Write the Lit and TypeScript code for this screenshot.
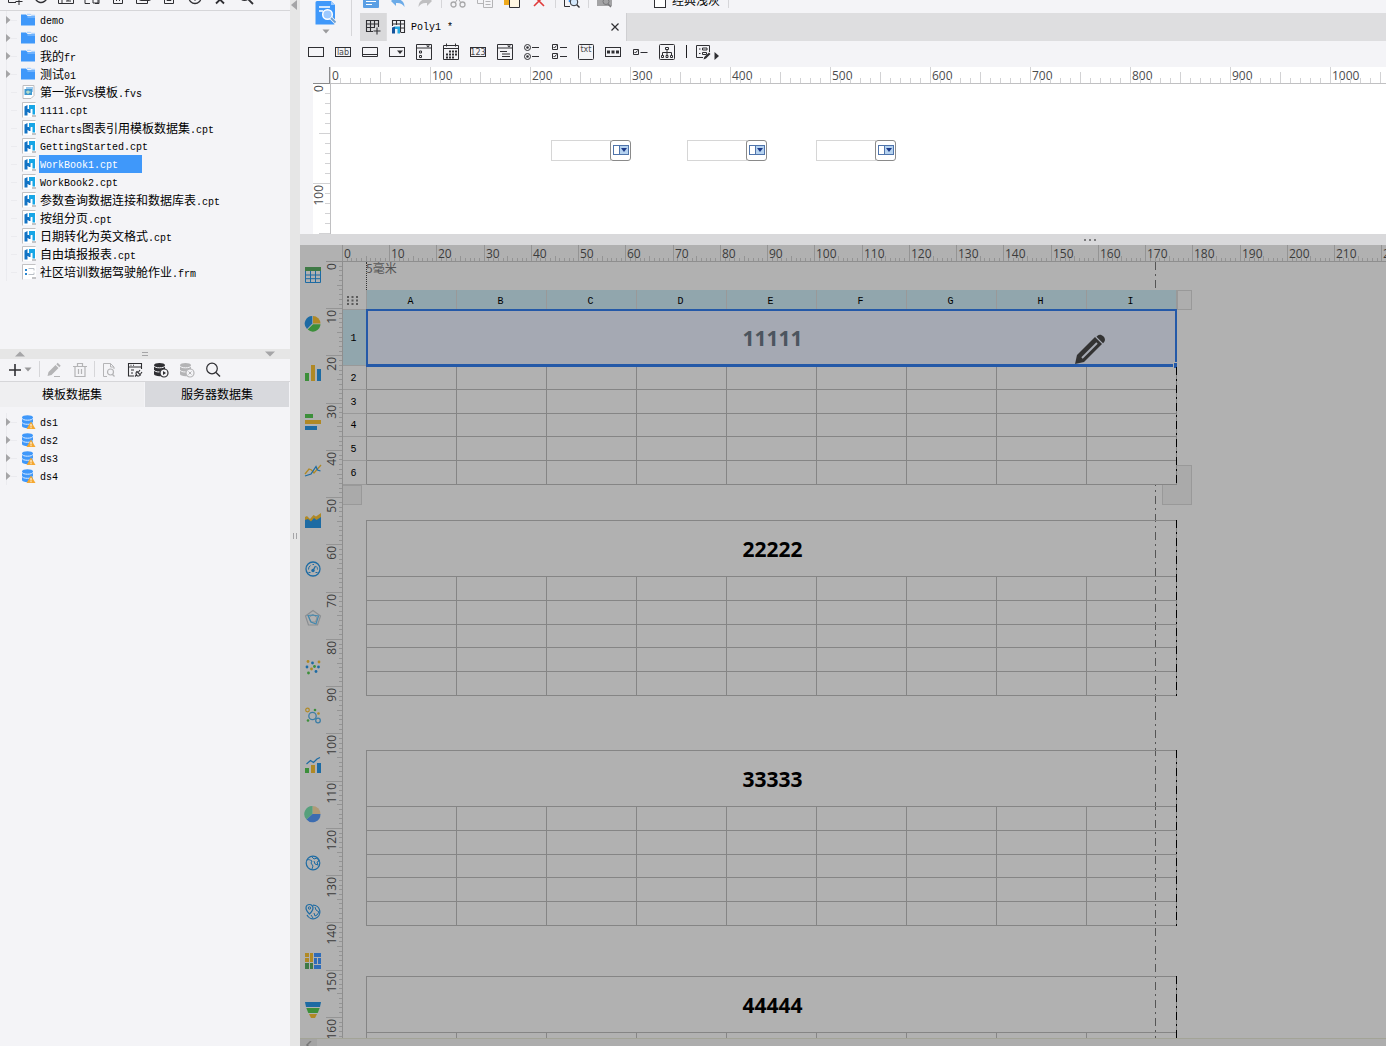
import { LitElement, html, svg, css, nothing, TemplateResult, SVGTemplateResult } from "lit";
import { customElement, property, state } from "lit/decorators.js";
import { classMap } from "lit/directives/class-map.js";

/* ---------- icon set: [viewBox width, viewBox height, drawing] ---------- */

const K = "#2f2f33";
const G = "#b4b4b6";
const BLUE = "#1d6ba3";
const GOLD = "#b08925";
const GREEN = "#3c8f3a";

const database = (c: string) => svg`
  <path d="M1 3.2C1 1.8 3.6 1 6.5 1S12 1.8 12 3.2V12c0 1.4-2.6 2.2-5.500 2.200S1 13.400 1 12Z" fill=${c}/>
  <path d="M1 3.800c0 1.200 2.600 2 5.500 2S12 5 12 3.800M1 8c0 1.200 2.600 2 5.500 2S12 9.200 12 8" fill="none" stroke="#f4f4f7" stroke-width="1"/>`;

const icons: Record<string, [number, number, SVGTemplateResult]> = {
  folder: [16, 14, svg`<path d="M1 1.500h5l1.500 1.500H15v9.500H1Z" fill="#3f98fa"/><path d="M7 1.300h3.500l1 1H15M7.500 4h7.500" stroke="#9fccff" fill="none"/>`],
  cpt: [14, 16, svg`<path d="M.5 15.500V.5h13" fill="none" stroke="#c2c2c4"/><rect x="1" y="1" width="13" height="14" fill="#fff"/><rect x="10" y="13" width="4" height="2" fill="#c4c4c6"/><path d="M2.500 4.500 5.500 3v4h3v4h-2v-1h-1v3.500h-3Z" fill="#1273c4"/><path d="M7 3h6v9.500h-2.500V7H9l-2 1Z" fill="#17a5e6"/>`],
  fvs: [14, 16, svg`<path d="M1 1.500h11v10l-3 3H1Z" fill="#fff" stroke="#bdbdc0"/><rect x="4" y="3" width="7" height="5" fill="#9cc9ee"/><rect x="2.500" y="5" width="7.500" height="6" fill="#3f98cf"/><path d="M4 8h4.500M6 6.500v3.500" stroke="#dff3c8"/>`],
  frm: [14, 16, svg`<path d="M.5 15.500V.5h13" fill="none" stroke="#c2c2c4"/><rect x="1" y="1" width="13" height="14" fill="#fff"/><rect x="10" y="13" width="4" height="2" fill="#c4c4c6"/><path d="M3 5h2v2H3ZM3 9h2v2H3Z" fill="#2a86cf"/><path d="M6.500 4.500H12v2M6.500 10.500H12v-2" fill="none" stroke="#b9bfc6"/>`],
  dataset: [16, 16, svg`<path d="M2 3.200C2 2 4.500 1.200 7.500 1.200s5.500.8 5.500 2V12c0 1.300-2.500 2.200-5.500 2.200S2 13.300 2 12Z" fill="#3f98fa"/><path d="M2 4.200c0 1.200 2.500 2 5.500 2s5.500-.8 5.500-2M2 8.300c0 1.200 2.500 2 5.500 2s5.500-.8 5.500-2" fill="none" stroke="#dcecff"/><path d="M11 7.500 15.500 15h-9Z" fill="#f5a831"/><path d="M11 10v2.500M11 13.200v1" stroke="#fff"/>`],

  newFile: [16, 16, svg`<path d="M9 13.500H1.500v-11h11V9M8.500 12.500h7M12 9v7" fill="none" stroke=${K}/>`],
  refresh: [16, 16, svg`<path d="M14 8a6 6 0 1 1-2-5" fill="none" stroke=${K} stroke-width="1.500"/>`],
  openFolder: [16, 16, svg`<path d="M.5 14.500v-12h5l2 2h8v10ZM4 14V8h4M10 8v4M8 12h5" fill="none" stroke=${K}/>`],
  rename: [16, 16, svg`<path d="M1 14.500V3.500h14v11h-4M1 14.500h5" fill="none" stroke=${K}/><path d="M9 9h5v5H9Z" fill="none" stroke=${K}/>`],
  bin: [16, 16, svg`<path d="M3.500 4v10.500h9V4M6.500 6v6M9.500 6v6M1 3.500h14" fill="none" stroke=${K}/>`],
  copyFile: [16, 16, svg`<rect x="4.500" y="2.500" width="11" height="9" rx="1" fill="none" stroke=${K}/><path d="M1.500 6v8.500h11V12" fill="none" stroke=${K}/>`],
  lockFile: [16, 16, svg`<path d="M3.500 2.500h9v12h-9ZM6 11.500h4V8H6Z" fill="none" stroke=${K}/>`],
  locate: [16, 16, svg`<circle cx="8" cy="8.500" r="6" fill="none" stroke=${K} stroke-width="1.300"/><path d="m5.500 9 2.500 2.500 2.500-2.500" fill="none" stroke=${K}/>`],
  collapse: [16, 16, svg`<path d="M4 14.500 8 10.500l4 4M8 10.500V6" fill="none" stroke=${K} stroke-width="1.800"/>`],
  find: [16, 16, svg`<circle cx="6.500" cy="6.500" r="5" fill="none" stroke=${K} stroke-width="1.200"/><path d="m10 10 5 5" stroke=${K} stroke-width="1.800"/>`],

  plus: [12, 12, svg`<path d="M6 0v12M0 6h12" stroke=${K} stroke-width="1.600"/>`],
  caret: [8, 5, svg`<path d="M.5.500h7L4 4.500Z" fill="#9a9a9c"/>`],
  pencil: [16, 16, svg`<path d="m1.500 14 1-4 7-7 3 3-7 7ZM10.300 2.200l1.400-1.400 3 3-1.400 1.400Z" fill=${G}/><path d="M8 14.500h6" stroke=${G}/>`],
  trash: [16, 16, svg`<path d="M1 4.500h14M5.500 4V1.500h5V4M3 5v9.500h10V5M6.500 7v5M9.500 7v5" fill="none" stroke=${G} stroke-width="1.200"/>`],
  preview: [16, 16, svg`<path d="M6 14.500H2.500v-13h7l3.500 3.500v2M9.500 1.500V5H13" fill="none" stroke=${G}/><circle cx="9.500" cy="10" r="3" fill="none" stroke=${G} stroke-width="1.200"/><path d="m11.500 12.500 2 2" stroke=${G} stroke-width="1.300"/>`],
  config: [16, 16, svg`<path d="M7 14H1.500V1.500h13V7M1.500 5h13M4 8h3M4 11h2M3.500 3.200h1M6 3.200h1" fill="none" stroke=${K} stroke-width="1.100"/><path d="m8 14.500 2-2M10 9.500a2.500 2.500 0 1 0 3.500 3.500ZM11.500 10l1.500-2M13.500 12l1.500-2" fill="none" stroke=${K} stroke-width="1.100"/>`],
  dbRun: [16, 16, svg`${database(K)}<circle cx="11" cy="11" r="4" fill="#f4f4f7" stroke=${K} stroke-width="1.200"/><path d="M10 9v4l3-2Z" fill=${K}/>`],
  dbStop: [16, 16, svg`${database(G)}<circle cx="11" cy="11" r="4" fill="#f4f4f7" stroke=${G} stroke-width="1.200"/><path d="m9.500 9.500 3 3m0-3-3 3" stroke=${G}/>`],
  search: [16, 16, svg`<circle cx="7" cy="6.500" r="5.300" fill="none" stroke=${K} stroke-width="1.200"/><path d="m11 10.500 4 4" stroke=${K} stroke-width="1.400"/>`],

  template: [24, 24, svg`<path d="M3 0h14l4 4v18a1.500 1.500 0 0 1-1.500 1.500H1.500V1.500A1.500 1.500 0 0 1 3 0Z" fill="#3f98fa"/><path d="M17 0v4h4" fill="#9fccff"/><path d="M5 6h11M5 10h4" stroke="#fff" stroke-width="1.600"/><circle cx="13.500" cy="13.500" r="4.800" fill="#9cc9ff" stroke="#fff" stroke-width="1.500"/><path d="m17 17 5 5" stroke="#f4f4f7" stroke-width="3.500"/><path d="m17 17 4.500 4.500" stroke="#6f9fd0" stroke-width="1.800"/>`],
  save: [16, 16, svg`<rect width="16" height="16" rx="1" fill="#5b9fe4"/><path d="M3 9.500h10M3 12.500h6" stroke="#fff"/>`],
  undo: [16, 16, svg`<path d="M6 4 1 9l5 5v-3c4-.5 6.500 1 8.500 4 0-5-3-8-8.500-8Z" fill="#6cabe8"/>`],
  redo: [16, 16, svg`<path d="m10 4 5 5-5 5v-3c-4-.5-6.500 1-8.500 4 0-5 3-8 8.500-8Z" fill="#bfbfc1"/>`],
  cut: [16, 16, svg`<path d="m5 11 7-11M11 11 4 0" stroke="#a9a9ab"/><circle cx="3.500" cy="12.500" r="2.500" fill="none" stroke="#a9a9ab" stroke-width="1.300"/><circle cx="12.500" cy="12.500" r="2.500" fill="none" stroke="#a9a9ab" stroke-width="1.300"/>`],
  copy: [16, 16, svg`<path d="M.5 1.500h9v10h-9Z" fill="none" stroke=${G}/><path d="M6.500 5.500h9v10h-9Z" fill="#f4f4f7" stroke=${G}/><path d="M8.500 9.500h5M8.500 12.500h5" stroke=${G}/>`],
  paste: [16, 16, svg`<path d="M0 0h10v13H0Z" fill="#efaa1e"/><path d="M5.500 5.500h10v10h-10Z" fill="#fff6e2" stroke=${K}/>`],
  remove: [16, 16, svg`<path d="m3 4 10 10M13 4 3 14" stroke="#e03a3a" stroke-width="1.600"/>`],
  pagePreview: [16, 16, svg`<path d="M6 14.500H.5V1h12v3" fill="none" stroke=${K}/><path d="M5.500 10V7h3" fill="none" stroke="#3f98fa" stroke-width="1.500"/><circle cx="10" cy="10" r="3.800" fill="#d4e8fb" stroke=${K}/><path d="m12.800 12.800 2.700 2.700" stroke=${K} stroke-width="1.400"/>`],
  findTpl: [16, 16, svg`<path d="M0 0h15v14H0Z" fill="#a3a3a5"/><circle cx="9" cy="9.500" r="3" fill="none" stroke="#77777a"/><path d="m11 12 3 3" stroke="#77777a" stroke-width="1.500"/>`],
  addSheet: [16, 16, svg`<path d="M8 12.500H1.500v-11h12V8M1.500 5h12M1.500 8.500H10M5.500 1.500v11M9.500 1.500V8M8.500 12h7M12 8.500v7" fill="none" stroke=${K} stroke-width="1.100"/>`],
  sheet: [16, 16, svg`<path d="M1.500 7V1.500h12v12H10M1.500 5h12M9.500 9h4M5.500 1.500V6M9.500 1.500v12" fill="none" stroke=${K} stroke-width="1.100"/><path d="M1 8.500 4 7.500v7H1Z" fill="#14539c"/><path d="M4 7.500h5v7H6.500V10H4Z" fill="#27a8e0"/>`],
  close: [10, 10, svg`<path d="m1.500 1.500 7 7m0-7-7 7" stroke=${K} stroke-width="1.200"/>`],

  wText: [18, 18, svg`<rect x="1.500" y="4.500" width="15" height="9" fill="none" stroke=${K}/>`],
  wLabel: [18, 18, svg`<rect x="1.500" y="4.500" width="15" height="9" fill="none" stroke=${K}/><text x="9" y="12" class="glyph">lab</text>`],
  wButton: [18, 18, svg`<path d="M1.500 13.500v-9h15v9ZM2 11.500h14" fill="none" stroke=${K}/>`],
  wCombo: [18, 18, svg`<rect x="1.500" y="4.500" width="15" height="9" fill="none" stroke=${K}/><path d="M9 7.500h6l-3 3.500Z" fill=${K}/>`],
  wComboCheck: [18, 18, svg`<path d="M1.500 1.500h15v15h-15ZM1.500 5h15M4.500 8h2v2h-2ZM4.500 12.500h2v2h-2Z" fill="none" stroke=${K}/><path d="M11 2.500h4l-2 2Z" fill=${K}/>`],
  wDate: [18, 18, svg`<path d="M1.500 2.500h15v14h-15ZM1.500 5.500h15M4.500.5v3M13.500.5v3" fill="none" stroke=${K}/><path d="M7 8.500h8M4 11.500h11M4 14.500h8" stroke=${K} stroke-width="2" stroke-dasharray="2 1"/>`],
  wNumber: [18, 18, svg`<rect x="1.500" y="4.500" width="15" height="9" fill="none" stroke=${K}/><text x="9" y="12" class="glyph">123</text>`],
  wTree: [18, 18, svg`<path d="M1.500 1.500h15v15h-15ZM1.500 5h15M4 8.500h7M6 11h8M6 13.500h8" fill="none" stroke=${K}/><path d="M11 2.500h4l-2 2Z" fill=${K}/>`],
  wRadio: [18, 18, svg`<circle cx="4.500" cy="4.500" r="3" fill="none" stroke=${K}/><circle cx="4.500" cy="13.500" r="3" fill="none" stroke=${K}/><circle cx="4.500" cy="4.500" r="1.300" fill=${K}/><circle cx="4.500" cy="13.500" r="1.300" fill=${K}/><path d="M9 4.500h7M9 13.500h7" stroke=${K}/>`],
  wCheck: [18, 18, svg`<path d="M2.500 1.500h5v5h-5ZM2.500 10.500h5v5h-5ZM10 4.500h7M10 13.500h7M3.500 4l1 1 2-2.500M3.500 13l1 1 2-2.500" fill="none" stroke=${K}/>`],
  wArea: [18, 18, svg`<rect x="1.500" y="1.500" width="15" height="15" rx="1" fill="none" stroke=${K}/><text x="9" y="9" class="glyph">txt</text>`],
  wPassword: [18, 18, svg`<rect x="1.500" y="4.500" width="15" height="9" fill="none" stroke=${K}/><path d="M3 9h12" stroke=${K} stroke-width="3" stroke-dasharray="3 1.500"/>`],
  wSingle: [18, 18, svg`<path d="M2.500 6.500h5v5h-5ZM9.500 9.500h7M3.500 9l1 1 2-2.500" fill="none" stroke=${K}/>`],
  wHierarchy: [18, 18, svg`<rect x="1.500" y="1.500" width="15" height="15" rx="1" fill="none" stroke=${K}/><path d="M7.500 4.500h3v2h-3ZM9 7v5M4.500 12V9.500h9V12M3.500 12.500h2v2h-2ZM8 12.500h2v2H8ZM12.500 12.500h2v2h-2Z" fill="none" stroke=${K}/>`],
  wForm: [18, 18, svg`<path d="M9 14.500H2.500v-12h13V9M5 6h1.500M8.500 5h4.500v2H8.500ZM5 10.500h1.500M8.500 9.500h4v2h-4Z" fill="none" stroke=${K}/><path d="m9.500 16.500.8-2.500 4.700-4.500 1.500 1.500-4.500 4.500Z" fill=${K}/>`],
  more: [6, 10, svg`<path d="M.5 1v8L5 5Z" fill=${K}/>`],
  dropdown: [16, 10, svg`<rect x=".5" y=".5" width="15" height="9" fill="#fff" stroke="#4f74ab"/><path d="M6 1h9v8H6Z" fill="#b5d2ef"/><path d="M6.500 1v8" stroke="#4f74ab"/><path d="M8 3h6l-3 4Z" fill="#1d3a8a"/>`],

  cTable: [18, 18, svg`<path d="M1 1h16v4H1Z" fill="#3f7a46"/><path d="M1.500 5v11.500h15V5M1.500 9h15M1.500 12.700h15M6.500 5v11.500M11.500 5v11.500" fill="none" stroke=${BLUE}/>`],
  cPie: [18, 18, svg`<path d="M9 8.500V1a7.700 7.700 0 0 1 7.500 7.500Z" fill=${GOLD}/><path d="M8.300 8.500V1A7.600 7.600 0 0 0 3 14Z" fill=${BLUE}/><path d="M9 9.300h7.500A7.600 7.600 0 0 1 3.700 14.500Z" fill=${GREEN}/>`],
  cColumn: [18, 18, svg`<path d="M1 9h4v8H1Z" fill=${GREEN}/><path d="M7 1h4v16H7Z" fill=${GOLD}/><path d="M13 5h4v12h-4Z" fill=${BLUE}/>`],
  cBar: [18, 18, svg`<path d="M1 1h8v4H1Z" fill=${GREEN}/><path d="M1 7h16v4H1Z" fill=${GOLD}/><path d="M1 13h12v4H1Z" fill=${BLUE}/>`],
  cLine: [18, 18, svg`<path d="m1 12 4-5 2.500 1L10 11l7-8" fill="none" stroke=${GOLD} stroke-width="1.300"/><path d="m1 14 6-2L12 4.500l1.500 3.500 3 1" fill="none" stroke=${BLUE} stroke-width="1.300"/>`],
  cArea: [18, 18, svg`<path d="m1 6 2-1 3 3 3.500-4 2.500 1.500L17 2v10H1Z" fill=${GOLD}/><path d="m1 9 3-1 3 2.500L10 7l2.500 2L17 6v11H1Z" fill=${BLUE}/>`],
  cGauge: [18, 18, svg`<circle cx="9" cy="9" r="7" fill="none" stroke=${BLUE} stroke-width="1.300"/><path d="M4.500 9.500a4.500 4.500 0 0 1 2-4M8.500 4.500h1.500M13.500 9.500c0-1.500-.5-2.500-1-3M4.500 12.500h2M11.500 12.500h2" fill="none" stroke=${BLUE}/><circle cx="9" cy="10.500" r="1.700" fill=${BLUE}/><path d="m9 10.500 2.500-4.500" stroke=${BLUE} stroke-width="1.300"/>`],
  cRadar: [18, 18, svg`<path d="m9 1.500 7.500 5.500-3 9h-9l-3-9Z" fill="none" stroke="#8c8f92" stroke-width="1.200"/><path d="m9 5.500 4 3-1.500 4.500h-5L5 8.500Z" fill="none" stroke="#8c8f92"/><path d="m4 6.500 4.500-.5 6 1L12 15l-5-2Z" fill="none" stroke="#4388ae" stroke-width="1.200"/>`],
  cScatter: [18, 18, svg`<g fill=${GOLD}><circle cx="4" cy="3.500" r="1.400"/><circle cx="15" cy="4" r="1.400"/><circle cx="7.500" cy="11" r="1.400"/></g><g fill=${BLUE}><circle cx="8.500" cy="5" r="1.400"/><circle cx="3" cy="9" r="1.400"/><circle cx="14.500" cy="9" r="1.400"/><circle cx="12" cy="13.500" r="1.400"/></g><g fill=${GREEN}><circle cx="10.500" cy="8.500" r="1.400"/><circle cx="4.500" cy="15" r="1.400"/></g>`],
  cBubble: [18, 18, svg`<circle cx="8.500" cy="9" r="3.700" fill="none" stroke="#3c7da5" stroke-width="1.300"/><circle cx="14" cy="13.500" r="2.300" fill="none" stroke="#3c7da5" stroke-width="1.300"/><circle cx="3.500" cy="3" r="1.800" fill="none" stroke=${GOLD} stroke-width="1.200"/><circle cx="14.500" cy="6.500" r="1.300" fill=${GOLD}/><circle cx="11" cy="3" r="1.300" fill=${GREEN}/><circle cx="4" cy="13.500" r="1.300" fill=${GREEN}/>`],
  cCombo: [18, 18, svg`<path d="M1 12h4v5H1Z" fill=${GREEN}/><path d="M7 9h4v8H7Z" fill=${GOLD}/><path d="M13 7h4v10h-4Z" fill=${BLUE}/><path d="m2.500 8 4-3.500 3 2L13 3l3-1.500" fill="none" stroke=${BLUE} stroke-width="1.200"/>`],
  cPie3d: [18, 18, svg`<path d="M8.500 9V1a8 8 0 0 1 8 8Z" fill="#b09a76"/><path d="M8.500 9V1a8 8 0 0 0-6 13.500Z" fill="#56a07c"/><path d="M8.500 9h8A8 8 0 0 1 2.500 14.500Z" fill="#3c6cb0"/>`],
  cMap: [18, 18, svg`<circle cx="9" cy="9" r="6.800" fill="none" stroke=${BLUE} stroke-width="1.200"/><path d="M3 6c2-1 3 0 5 1l-1 2 2 3-1 3M8 3l2 2 3-1 2 3-2 1 1 3-3-1-1-3" fill="none" stroke=${BLUE}/>`],
  cPinMap: [18, 18, svg`<path d="M9 2.200A6.800 6.800 0 1 1 3 12" fill="none" stroke=${BLUE} stroke-width="1.200"/><path d="M5.500 11C3 8.500 2 7 2 5a3.500 3.500 0 0 1 7 0c0 2-1 3.500-3.500 6Z" fill="none" stroke=${BLUE} stroke-width="1.200"/><circle cx="5.500" cy="5" r="1.200" fill="none" stroke=${BLUE}/><path d="m11 4 1 3 3 2-2 3-2 1-1-3M7 12l2 3" fill="none" stroke=${BLUE}/>`],
  cTreemap: [18, 18, svg`<path d="M1 1h4v4H1ZM1 6h4v4H1ZM6 1h3v9H6Z" fill=${GOLD}/><path d="M1 11h4v6H1ZM6 11h3v6H6Z" fill="#3f7a46"/><path d="M10 1h7v4h-7ZM10 6h3v6h-3ZM14 6h3v6h-3ZM10 13h7v4h-7Z" fill="#2f6cb8"/>`],
  cFunnel: [18, 18, svg`<path d="M1 1h16l-1 5H2Z" fill=${BLUE}/><path d="M2.300 7h13.400l-2 5H4.300Z" fill=${GREEN}/><path d="M5 13h8l-2 4H7Z" fill=${GOLD}/>`],
};

const icon = (name: string) => {
  const [w, h, body] = icons[name];
  return html`<svg class="icon" width=${w} height=${h} viewBox="0 0 ${w} ${h}" aria-hidden="true">${body}</svg>`;
};

/* Chinese runs are set at 12px, half-width runs at 10px mono (6px per glyph). */
const mixed = (text: string) =>
  text
    .split(/([\u4e00-\u9fff]+)/)
    .filter(Boolean)
    .map((run) => (/[\u4e00-\u9fff]/.test(run) ? html`<span class="han">${run}</span>` : html`<span class="half">${run}</span>`));

/* ---------- ruler ---------- */

@customElement("edge-ruler")
class EdgeRuler extends LitElement {
  @property() axis: "x" | "y" = "x";
  @property({ type: Number }) unit = 10;
  @property({ type: Number }) step = 10;
  @property({ type: Number }) origin = 0;
  @property({ type: Number }) thickness = 17;
  @state() private extent = 0;
  private observer?: ResizeObserver;

  static styles = css`
    :host { display: block; overflow: hidden; color: var(--tick); min-width: 0; min-height: 0; }
    svg { display: block; overflow: hidden; }
    text { font: 12px "Open Sans", "Noto Sans", sans-serif; fill: var(--label); }
  `;

  firstUpdated() {
    this.observer = new ResizeObserver(() => {
      const box = this.getBoundingClientRect();
      this.extent = this.axis === "x" ? box.width : box.height;
    });
    this.observer.observe(this);
  }

  disconnectedCallback() {
    super.disconnectedCallback();
    this.observer?.disconnect();
  }

  render() {
    const t = this.thickness;
    const marks: SVGTemplateResult[] = [];
    for (let i = 0; ; i++) {
      const p = Math.round(this.origin + (i * this.unit) / 10);
      if (p > this.extent) break;
      const size = i % 10 === 0 ? t : i % 5 === 0 ? (this.unit > 60 ? 11 : 5) : this.unit > 60 ? 5 : 3;
      marks.push(
        this.axis === "x"
          ? svg`<rect x=${p} y=${t - size} width="1" height=${size} fill="currentColor"/>`
          : svg`<rect x=${t - size} y=${p} width=${size} height="1" fill="currentColor"/>`
      );
      if (i % 10 === 0) {
        const label = (i / 10) * this.step;
        marks.push(
          this.axis === "x"
            ? svg`<text x=${p + 2} y="13">${label}</text>`
            : svg`<text transform="translate(10 ${p + 2}) rotate(-90)" text-anchor="end">${label}</text>`
        );
      }
    }
    const w = this.axis === "x" ? this.extent : t;
    const h = this.axis === "x" ? t : this.extent;
    return html`<svg width=${w} height=${h}>${marks}</svg>`;
  }
}

/* ---------- data ---------- */

interface Entry { name: string; icon: string; open?: boolean; selected?: boolean }

const files: Entry[] = [
  { name: "demo", icon: "folder", open: true },
  { name: "doc", icon: "folder", open: true },
  { name: "我的fr", icon: "folder", open: true },
  { name: "测试01", icon: "folder", open: true },
  { name: "第一张FVS模板.fvs", icon: "fvs" },
  { name: "1111.cpt", icon: "cpt" },
  { name: "ECharts图表引用模板数据集.cpt", icon: "cpt" },
  { name: "GettingStarted.cpt", icon: "cpt" },
  { name: "WorkBook1.cpt", icon: "cpt", selected: true },
  { name: "WorkBook2.cpt", icon: "cpt" },
  { name: "参数查询数据连接和数据库表.cpt", icon: "cpt" },
  { name: "按组分页.cpt", icon: "cpt" },
  { name: "日期转化为英文格式.cpt", icon: "cpt" },
  { name: "自由填报报表.cpt", icon: "cpt" },
  { name: "社区培训数据驾驶舱作业.frm", icon: "frm" },
];

const datasets: Entry[] = ["ds1", "ds2", "ds3", "ds4"].map((name) => ({ name, icon: "dataset", open: true }));

const fileTools = ["newFile", "refresh", "openFolder", "rename", "bin", "copyFile", "lockFile", "locate", "collapse", "find"];
const widgets = ["wText", "wLabel", "wButton", "wCombo", "wComboCheck", "wDate", "wNumber", "wTree", "wRadio", "wCheck", "wArea", "wPassword", "wSingle", "wHierarchy"];
const charts = ["cTable", "cPie", "cColumn", "cBar", "cLine", "cArea", "cGauge", "cRadar", "cScatter", "cBubble", "cCombo", "cPie3d", "cMap", "cPinMap", "cTreemap", "cFunnel"];
const columns = ["A", "B", "C", "D", "E", "F", "G", "H", "I"];

/* ---------- application ---------- */

@customElement("app-root")
class AppRoot extends LitElement {
  @state() private tab = 0;

  static styles = css`
    :host {
      display: flex;
      height: 100vh;
      overflow: hidden;
      background: #f4f4f7;
      color: #000;
      font: 12px/18px "Liberation Sans", "Noto Sans CJK SC", sans-serif;
      --bg: #f4f4f7;
      --dim: #b1b1b1;
      --grid: #858585;
      --edge: #999;
      --head: #91a6ad;
      --line: #d6d6d9;
    }
    * { box-sizing: border-box; }
    button { border: 0; padding: 0; margin: 0; background: none; font: inherit; color: inherit; display: flex; align-items: center; justify-content: center; flex: none; }
    .icon { display: block; flex: none; }
    .glyph { font: 8px "DejaVu Sans", sans-serif; text-anchor: middle; fill: #4a4a4e; }
    .han { font-family: "Noto Sans CJK SC", sans-serif; font-size: 12px; }
    .half { font-family: "Liberation Mono", monospace; font-size: 10px; }
    .sep { width: 1px; height: 16px; background: var(--line); flex: none; }

    /* left side */
    .side { width: 290px; flex: none; display: flex; flex-direction: column; }
    .files { height: 349px; flex: none; display: flex; flex-direction: column; }
    .file-tools { height: 11px; flex: none; overflow: hidden; display: flex; align-items: flex-end; justify-content: space-between; padding: 0 36px 5px 7px; border-bottom: 1px solid var(--line); }
    .tree { list-style: none; margin: 0; padding: 0; }
    .row { display: flex; align-items: center; height: 18px; padding-left: 6px; }
    .twig { width: 14px; height: 18px; flex: none; display: flex; align-items: center; border-left: 1px solid #ebebef; }
    .twig::after { content: ""; width: 6px; height: 1px; background: #ebebef; margin-left: auto; margin-right: 3px; }
    .twig .icon { margin-left: -1px; }
    .kind { width: 19px; flex: none; display: flex; justify-content: flex-start; }
    .kind.file { padding-left: 2px; }
    .name { line-height: 18px; height: 18px; padding: 0 1px; white-space: nowrap; }
    .selected .name { background: #3f98fa; color: #fff; padding-right: 24px; }
    .split-h { height: 10px; flex: none; background: #e6e6e6; display: flex; align-items: center; justify-content: space-between; padding: 0 15px; }
    .data-tools { height: 23px; flex: none; display: flex; align-items: flex-start; padding-left: 9px; border-bottom: 1px solid var(--line); }
    .data-tools button { width: 26px; height: 21px; }
    .data-tools .add { width: 29px; gap: 3px; justify-content: flex-start; }
    .data-tools .sep { margin: 2px 1px 0; }
    .tabs { display: flex; height: 25px; flex: none; gap: 1px; padding-right: 1px; }
    .tabs button { flex: 1; background: #efeff1; padding-bottom: 2px; }
    .tabs button.off { background: #d8d9dd; }
    .datasets { padding-top: 6px; flex: 1; }
    .split-v { width: 10px; flex: none; background: #e6e6e6; display: flex; flex-direction: column; justify-content: center; position: relative; }
    .split-v .grip { display: flex; gap: 2px; margin-left: 3px; margin-top: 26px; }
    .split-v .grip i { width: 1px; height: 6px; background: #a5a5a7; }
    .split-v .fold { position: absolute; left: 0; top: 0; }

    /* right side */
    .main { flex: 1; min-width: 0; display: flex; flex-direction: column; }
    .head { display: flex; height: 41px; flex: none; }
    .mode { width: 52px; height: 36px; flex: none; border-right: 1px solid var(--line); display: flex; flex-direction: column; align-items: center; justify-content: flex-start; gap: 4px; padding-top: 1px; }
    .head-right { flex: 1; min-width: 0; display: flex; flex-direction: column; padding-left: 8px; }
    .actions { height: 13px; overflow: hidden; display: flex; align-items: flex-end; padding: 0 0 5px 3px; gap: 11px; }
    .actions button { width: 16px; }
    .actions .sep { margin: 0 -3px; }
    .actions .gap { gap: 6px; display: flex; align-items: flex-end; margin-left: 30px; line-height: 16px; height: 16px; }
    .actions input { appearance: none; width: 12px; height: 12px; margin: 0; border: 1px solid #2f2f33; background: #fff; }
    .docs { display: flex; height: 28px; background: #dedee0; }
    .docs .new { width: 26px; background: #d9d9db; }
    .doc { display: flex; align-items: center; width: 240px; margin-left: 1px; background: var(--bg); border-right: 1px solid #cfcfd2; padding: 0 6px 0 4px; }
    .doc .title { flex: 1; padding: 2px 0 0 4px; }
    .palette { height: 26px; flex: none; display: flex; align-items: flex-start; padding: 2px 0 0 2px; }
    .palette button { width: 27px; height: 18px; }
    .palette .bar { width: 1px; height: 13px; margin: 2px 2px 0 6px; background: #1f1f22; }
    .palette .more { width: 8px; margin: 4px 0 0 -3px; }

    .params { flex: none; display: grid; grid-template: 17px 150px / 17px 1fr; padding-left: 13px; --tick: #d2d2d4; --label: #4b4b4d; }
    .params .top { grid-column: 2; background: #fff; border-bottom: 1px solid #c0c0c2; }
    .params .left { background: #fff; }
    .params .corner { border-bottom: 1px solid #8a8a8c; border-right: 1px solid #8a8a8c; }
    .canvas { position: relative; background: #fff; border-left: 1px solid #c0c0c2; overflow: hidden; }
    .combo { position: absolute; top: 56px; display: flex; height: 21px; }
    .combo input { width: 60px; height: 21px; border: 1px solid #d6d6d6; background: #fff; padding: 0 4px; margin: 0; }
    .combo button { width: 21px; height: 21px; margin-left: -1px; border: 1px solid #8a8a8a; border-radius: 3px; background: #fff; padding-bottom: 1px; }

    .divider { height: 11px; flex: none; background: #d9d9db; display: flex; align-items: center; justify-content: center; gap: 3px; padding-left: 494px; }
    .divider i { width: 2px; height: 2px; background: #7c7c7e; }

    .designer { flex: 1; min-height: 0; display: grid; grid-template: 17px 1fr 8px / 26px 17px 1fr; background: var(--dim); --tick: #949494; --label: #3c3c3c; }
    .charts { grid-row: 1 / 3; display: flex; flex-direction: column; align-items: center; gap: 31px; padding-top: 21px; overflow: hidden; }
    .designer .top { grid-column: 2 / 4; border-bottom: 1px solid #8e8e8e; }
    .designer .left { border-right: 1px solid #8e8e8e; }
    .page { position: relative; overflow: hidden; }
    .margin-note { height: 28px; padding-left: 23px; line-height: 14px; color: #555; display: flex; }
    .margin-note::before { content: ""; height: 28px; border-left: 1px dotted #333; }
    .margin-note .han { margin-left: -1px; line-height: 12px; }
    .guide { position: absolute; top: 0; bottom: 0; left: 812px; width: 1px; background: repeating-linear-gradient(#555 0 8px, transparent 8px 12px, #555 12px 14px, transparent 14px 18px); }
    .block { position: relative; width: 834px; }
    .block.first { z-index: 1; margin-bottom: 35px; }
    .block.plain { padding-left: 23px; }
    .block.second { margin-bottom: 54px; }
    .block.third { margin-bottom: 50px; }
    .block::after { content: ""; position: absolute; right: 0; top: 0; bottom: 0; width: 1px; background: repeating-linear-gradient(#000 0 8px, transparent 8px 12px, #000 12px 14px, transparent 14px 18px); }
    .block.first::after { top: 77px; }
    table { position: relative; border-collapse: separate; border-spacing: 0; table-layout: fixed; width: 100%; }
    td, th { padding: 0; border: solid var(--grid); border-width: 0 1px 1px 0; font: 10px/12px "Liberation Mono", monospace; text-align: center; height: 24px; }
    .first table { background: var(--dim); }
    .first .rows { width: 24px; }
    .plain tr:first-child td { border-top: 1px solid var(--grid); height: 57px; }
    .plain td:first-child { border-left: 1px solid var(--grid); }
    .plain .edge { width: 91px; }
    .short td, .short th { height: 23px; }
    thead th { height: 20px; padding: 4px 2px 0 0; border-color: var(--edge); background: var(--head); }
    thead th.all { background: var(--dim); padding: 2px 4px 0 0; }
    thead .icon { margin: 0 auto; }
    tbody th { padding: 2px 2px 0 0; border-color: var(--edge) var(--grid) var(--edge) var(--edge); }
    .big td, .big th { height: 56px; }
    .big th { background: var(--head); }
    .big td, .plain .title { position: relative; padding-left: 2px; font: bold 21px/28px "Noto Sans", "Open Sans", sans-serif; }
    .big td { background: #a5a9b3; color: #4c555e; }
    .picked { position: absolute; inset: -1px -1px -2px -1px; border: 2px solid #2459a8; border-bottom-width: 3px; }
    .handle { position: absolute; right: -1px; bottom: -3px; width: 4px; height: 6px; background: #2459a8; border: solid var(--dim); border-width: 1px 0 0 1px; }
    .edit { position: absolute; right: 70px; bottom: 0; }
    .stub { position: absolute; border: 1px solid var(--edge); background: #aaa; }
    .stub.ne { left: 834px; top: 0; width: 15px; height: 20px; background: #aeaeae; }
    .stub.se { left: 819px; top: 175px; width: 30px; height: 40px; }
    .stub.sw { left: -1px; top: 195px; width: 20px; height: 20px; }
    .scroll { grid-column: 1 / 4; border-top: 1px solid #a3a497; background: #adadad; overflow: hidden; }
    .scroll button { width: 17px; height: 7px; background: #a4a4a4; align-items: flex-start; padding-top: 2px; overflow: hidden; }
  `;

  private triangle(dir: "up" | "down" | "left") {
    const d = { up: "M0 5.500h10L5 .5Z", down: "M0 .5h10L5 5.500Z", left: "M7 0v10L1 5Z" }[dir];
    return dir === "left"
      ? html`<svg class="icon fold" width="8" height="10" viewBox="0 0 8 10"><path d=${d} fill="#a5a5a7"/></svg>`
      : html`<svg class="icon" width="10" height="6" viewBox="0 0 10 6"><path d=${d} fill="#a5a5a7"/></svg>`;
  }

  private tree(entries: Entry[]) {
    return html`<ul class="tree">
      ${entries.map(
        (e) => html`<li class=${classMap({ row: true, selected: !!e.selected })}>
          <span class="twig">${e.open
            ? html`<svg class="icon" width="5" height="8" viewBox="0 0 5 8"><path d="M0 0v8l4.500-4Z" fill="#a5a5a7"/></svg>`
            : nothing}</span>
          <span class=${classMap({ kind: true, file: !e.open })}>${icon(e.icon)}</span>
          <span class="name">${mixed(e.name)}</span>
        </li>`
      )}
    </ul>`;
  }

  private tool(name: string, label = name) {
    return html`<button aria-label=${label}>${icon(name)}</button>`;
  }

  private side() {
    return html`<aside class="side">
      <section class="files">
        <div class="file-tools">${fileTools.map((t) => this.tool(t))}</div>
        ${this.tree(files)}
      </section>
      <div class="split-h">
        ${this.triangle("up")}
        <svg class="icon" width="6" height="4" viewBox="0 0 6 4"><path d="M0 .5h6M0 3.500h6" stroke="#a5a5a7"/></svg>
        ${this.triangle("down")}
      </div>
      <div class="data-tools">
        <button class="add" aria-label="add">${icon("plus")}${icon("caret")}</button>
        <span class="sep"></span>
        ${["pencil", "trash"].map((t) => this.tool(t))}
        <span class="sep"></span>
        ${["preview", "config", "dbRun", "dbStop", "search"].map((t) => this.tool(t))}
      </div>
      <div class="tabs" role="tablist">
        ${["模板数据集", "服务器数据集"].map(
          (label, i) => html`<button role="tab" aria-selected=${this.tab === i} class=${classMap({ off: this.tab !== i })} @click=${() => (this.tab = i)}>
            <span class="han">${label}</span>
          </button>`
        )}
      </div>
      <div class="datasets">${this.tree(datasets)}</div>
    </aside>`;
  }

  private header() {
    return html`<header class="head">
      <button class="mode" aria-label="template">${icon("template")}${icon("caret")}</button>
      <div class="head-right">
        <div class="actions">
          ${["save", "undo", "redo"].map((t) => this.tool(t))}
          <span class="sep"></span>
          ${["cut", "copy", "paste", "remove"].map((t) => this.tool(t))}
          <span class="sep"></span>
          ${this.tool("pagePreview")}
          <span class="sep"></span>
          ${this.tool("findTpl")}
          <label class="gap"><input type="checkbox" /><span class="han">经典浅灰</span></label>
          <span class="sep"></span>
        </div>
        <div class="docs">
          <button class="new" aria-label="new sheet">${icon("addSheet")}</button>
          <div class="doc">
            ${icon("sheet")}<span class="title half">Poly1 *</span>
            <button aria-label="close">${icon("close")}</button>
          </div>
        </div>
      </div>
    </header>`;
  }

  private rows(from: number, count: number, heads: boolean): TemplateResult[] {
    return Array.from({ length: count }, (_, i) => html`<tr class=${classMap({ short: i === 2 })}>
      ${heads ? html`<th scope="row">${from + i}</th>` : nothing}
      ${columns.map(() => html`<td></td>`)}
    </tr>`);
  }

  private plainBlock(title: string, place: string, count = 5) {
    return html`<div class="block plain ${place}">
      <table>
        <colgroup><col class="edge" />${columns.slice(1).map(() => html`<col />`)}</colgroup>
        <tbody>
          <tr><td class="title" colspan="9">${title}</td></tr>
          ${this.rows(2, count, false)}
        </tbody>
      </table>
    </div>`;
  }

  private page() {
    return html`<div class="page">
      <div class="guide"></div>
      <div class="margin-note"><span class="han">5毫米</span></div>
      <div class="block first">
        <i class="stub ne"></i><i class="stub se"></i><i class="stub sw"></i>
        <table>
          <colgroup><col class="rows" />${columns.map(() => html`<col />`)}</colgroup>
          <thead><tr>
            <th class="all"><svg class="icon" width="11" height="9" viewBox="0 0 11 9"><path d="M0 1h11M0 4.500h11M0 8h11" stroke="#5a5a5a" stroke-width="2" stroke-dasharray="2 2.500"/></svg></th>
            ${columns.map((c) => html`<th scope="col">${c}</th>`)}
          </tr></thead>
          <tbody>
            <tr class="big">
              <th scope="row">1</th>
              <td colspan="9">11111<i class="picked"></i><i class="handle"></i>
                <svg class="edit" width="32" height="32" viewBox="0 0 32 32" aria-hidden="true">
                  <path d="M1 31 3 22 21 4l7 7L10 29Z" fill="#333"/>
                  <path d="m8 25 15-15" stroke="#a5a9b3" stroke-width="2"/>
                  <path d="M23.500 2.800c3-3.500 10 2 6.500 6.500l-1 .9-6.500-6.400Z" fill="#333"/>
                  <path d="m21.500 3.500 7 7" stroke="#a5a9b3"/>
                </svg>
              </td>
            </tr>
            ${this.rows(2, 5, true)}
          </tbody>
        </table>
      </div>
      ${this.plainBlock("22222", "second")}
      ${this.plainBlock("33333", "third")}
      ${this.plainBlock("44444", "fourth", 1)}
    </div>`;
  }

  render() {
    return html`
      ${this.side()}
      <div class="split-v">${this.triangle("left")}<span class="grip"><i></i><i></i></span></div>
      <main class="main">
        ${this.header()}
        <div class="palette">
          ${widgets.map((w) => this.tool(w))}
          <span class="bar"></span>
          ${this.tool("wForm")}
          <button class="more" aria-label="more">${icon("more")}</button>
        </div>
        <section class="params">
          <div class="corner"></div>
          <edge-ruler class="top" axis="x" unit="100" step="100" thickness="16"></edge-ruler>
          <edge-ruler class="left" axis="y" unit="100" step="100" origin="-1" thickness="17"></edge-ruler>
          <div class="canvas">
            ${[220, 356, 485].map(
              (x, i) => html`<div class="combo" style="left:${x}px">
                <input type="text" aria-label="parameter ${i + 1}" /><button aria-label="open ${i + 1}">${icon("dropdown")}</button>
              </div>`
            )}
          </div>
        </section>
        <div class="divider"><i></i><i></i><i></i></div>
        <section class="designer">
          <div class="charts">${charts.map((c) => this.tool(c))}</div>
          <edge-ruler class="top" axis="x" unit="47.24" step="10" origin="16" thickness="16"></edge-ruler>
          <edge-ruler class="left" axis="y" unit="47.24" step="10" origin="-1" thickness="16"></edge-ruler>
          ${this.page()}
          <div class="scroll"><button aria-label="scroll left"><svg class="icon" width="8" height="8" viewBox="0 0 8 8"><path d="M6 0 2 4l4 4" fill="none" stroke="#777" stroke-width="1.500"/></svg></button></div>
        </section>
      </main>
    `;
  }
}
